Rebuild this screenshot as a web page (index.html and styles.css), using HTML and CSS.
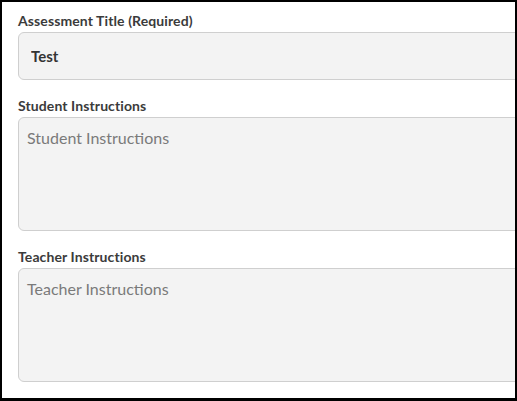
FILE: index.html
```html
<!DOCTYPE html>
<html>
<head>
<meta charset="utf-8">
<link rel="stylesheet" href="styles.css">
</head>
<body>
<div class="frame">
  <form class="form">
    <div class="group">
      <label class="label" for="title">Assessment Title (Required)</label>
      <input class="field input" id="title" type="text" value="Test">
    </div>
    <div class="group">
      <label class="label" for="student">Student Instructions</label>
      <textarea class="field area" id="student" placeholder="Student Instructions"></textarea>
    </div>
    <div class="group">
      <label class="label" for="teacher">Teacher Instructions</label>
      <textarea class="field area" id="teacher" placeholder="Teacher Instructions"></textarea>
    </div>
  </form>
</div>
</body>
</html>
```

FILE: styles.css
```css
html, body {
  margin: 0;
  padding: 0;
  background: #fff;
}
.frame {
  box-sizing: border-box;
  width: 517px;
  height: 401px;
  border-style: solid;
  border-color: #000;
  border-width: 2px 2px 3px 2px;
  overflow: hidden;
  background: #fff;
}
.form {
  display: flex;
  flex-direction: column;
  gap: 18px;
  padding: 11px 0 0 16px;
  font-family: Lato, "Open Sans", sans-serif;
}
.group {
  display: flex;
  flex-direction: column;
  gap: 4px;
}
.label {
  font-size: 14px;
  line-height: 15px;
  font-weight: 700;
  letter-spacing: 0.1px;
  color: #3b3b3b;
}
.field {
  box-sizing: border-box;
  width: 540px;
  margin: 0;
  border: 1px solid #cfcfcf;
  border-radius: 6px;
  background: #f3f3f3;
  font-family: Lato, "Open Sans", sans-serif;
  outline: none;
}
.input {
  height: 48px;
  padding: 0 12px;
  font-size: 15px;
  font-weight: 700;
  color: #333;
}
.area {
  height: 114px;
  padding: 10px 8px;
  font-size: 16px;
  line-height: 20px;
  color: #333;
  resize: none;
}
.area::placeholder {
  color: #7a7a7a;
  opacity: 1;
}
```
